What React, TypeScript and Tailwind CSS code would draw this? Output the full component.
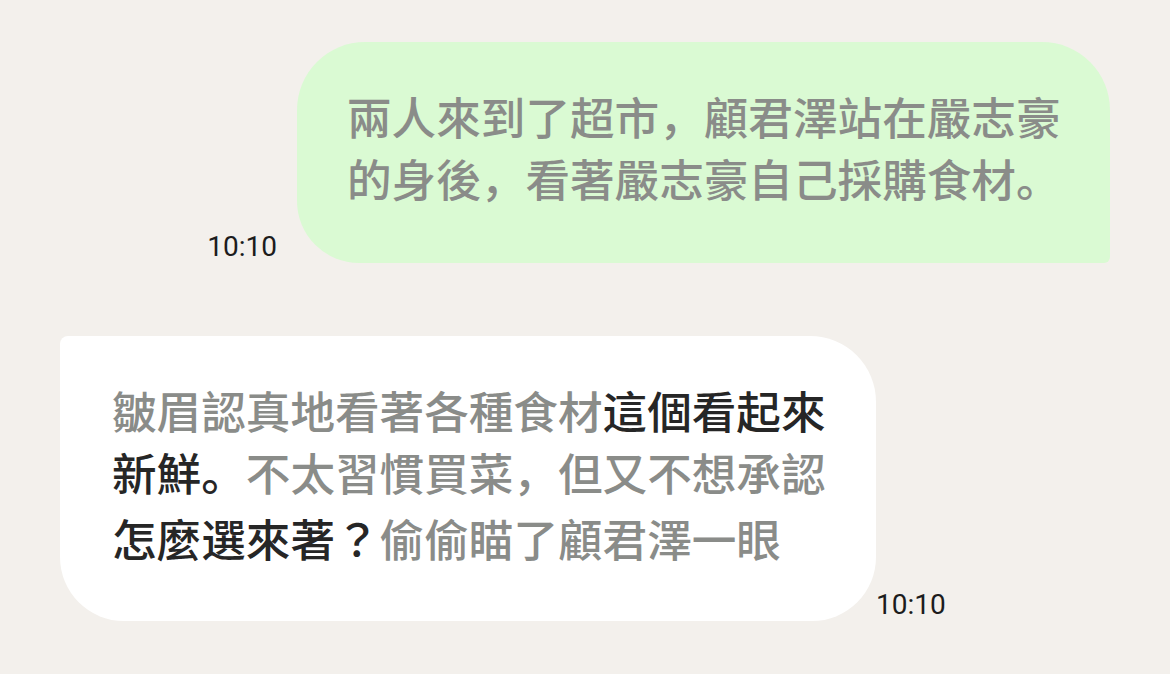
import React from 'react';

const cjk = 'font-["Roboto","Noto_Sans_CJK_SC",sans-serif]';

const Time = ({ children }: { children: React.ReactNode }) => (
  <span className={`${cjk} text-[28px] leading-none text-[#1c1c1c] mb-[2px] shrink-0`}>{children}</span>
);

const Gray = ({ children }: { children: React.ReactNode }) => (
  <span className="text-[#8a8c89]">{children}</span>
);

const Dark = ({ children }: { children: React.ReactNode }) => (
  <span className="text-[#262626]">{children}</span>
);

export default function App() {
  return (
    <div className={`${cjk} w-[1170px] h-[674px] bg-[#f3f0ec] overflow-hidden`}>
      {/* outgoing */}
      <div className="flex items-end justify-end gap-[20px] pt-[42px] pr-[60px]">
        <Time>10:10</Time>
        <div className="w-[813px] bg-[#dafad3] rounded-t-[68px] rounded-bl-[62px] rounded-br-[6px] pl-[50px] pt-[47px] pb-[50px] text-[44.6px] leading-[62px] font-medium text-[#8a8c89] whitespace-nowrap">
          <div>兩人來到了超市，顧君澤站在嚴志豪</div>
          <div>的身後，看著嚴志豪自己採購食材。</div>
        </div>
      </div>

      {/* incoming */}
      <div className="flex items-end mt-[73px] pl-[60px]">
        <div className="w-[816px] bg-white rounded-tl-[8px] rounded-tr-[66px] rounded-b-[64px] pl-[52px] pt-[47px] pb-[48px] text-[44.6px] leading-[62px] font-medium whitespace-nowrap">
          <div>
            <Gray>皺眉認真地看著各種食材</Gray>
            <Dark>這個看起來</Dark>
          </div>
          <div>
            <Dark>新鮮。</Dark>
            <Gray>不太習慣買菜，但又不想承認</Gray>
          </div>
          <div>
            <Dark>
              怎麼選來著<span className='font-["Noto_Sans_CJK_JP",sans-serif]'>？</span>
            </Dark>
            <Gray>偷偷瞄了顧君澤一眼</Gray>
          </div>
        </div>
        <Time>10:10</Time>
      </div>
    </div>
  );
}
